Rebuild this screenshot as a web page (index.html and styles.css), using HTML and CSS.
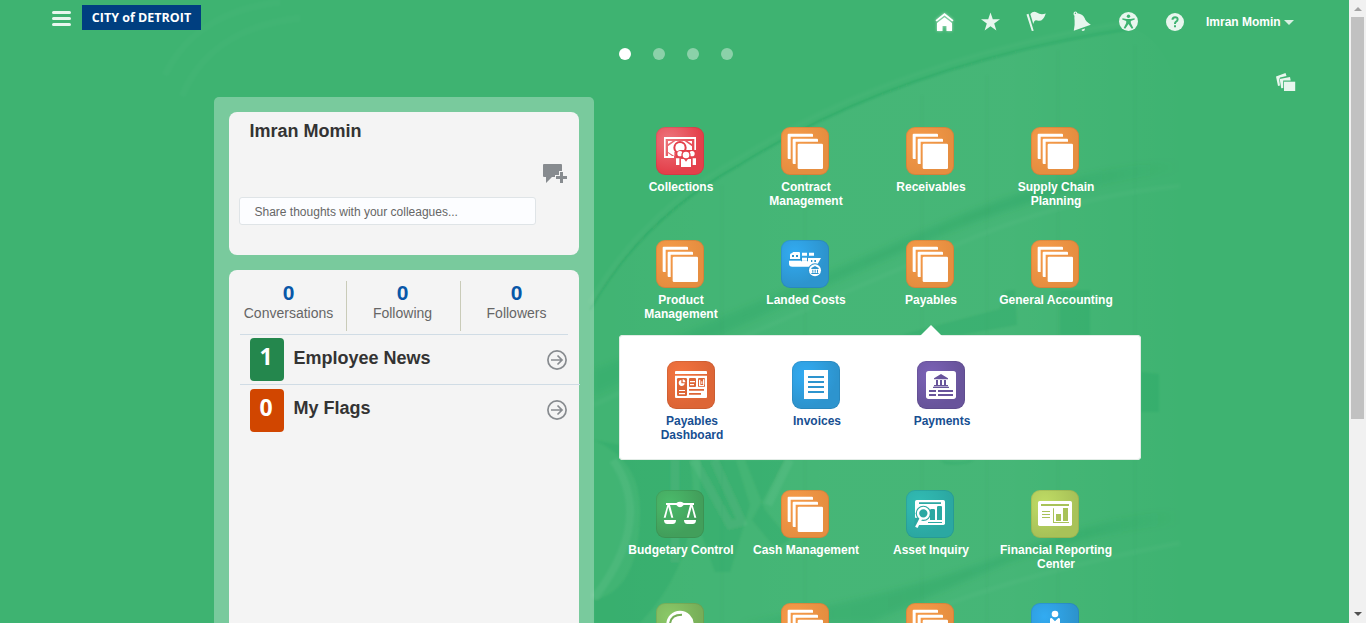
FILE: index.html
```
<!DOCTYPE html>
<html lang="en">
<head>
<meta charset="utf-8">
<title>City of Detroit</title>
<link rel="stylesheet" href="styles.css">
</head>
<body>
<svg class="defs" width="0" height="0" aria-hidden="true">
  <symbol id="stack" viewBox="0 0 144 144"><path fill="#fff" d="M23 20h70q3 0 3 3v6H29v67h-6q-3 0-3-3V23q0-3 3-3zM38 35h70q3 0 3 3v6H44v67h-6q-3 0-3-3V38q0-3 3-3z"/><rect x="50" y="50" width="76" height="76" rx="4" fill="#fff"/></symbol>
  <symbol id="collections" viewBox="0 0 144 144"><path fill="#fff" fill-rule="evenodd" d="M24 30h96v39h-5V36H29v51h25v6H24z"/><path fill="#fff" d="M36 51V42h14zM36 58l22-16h28l22 16v17H55v12l-19-12zM36 78l12 9H36zM94 42h14v9z"/><circle cx="72" cy="62" r="20" fill="currentColor"/><circle cx="72" cy="62" r="14" fill="#fff"/><path fill="currentColor" d="M59 92V82q4-13 16-13h45v23z"/><g fill="#fff"><circle cx="72" cy="80" r="8"/><circle cx="108" cy="80" r="8"/><circle cx="90" cy="84" r="14" fill="currentColor"/><circle cx="90" cy="84" r="10"/><path d="M60 94h10v20H60zM110 94h10v20h-10zM75 96h9l6 8 6-8h9v24H75z"/></g></symbol>
  <symbol id="ship" viewBox="0 0 144 144"><g fill="#fff"><path d="M27 57V45q0-5 5-5l5-4h17q3 0 3 4v17zM24 62h57v-8h39l-10 18q-20 0-24 8H34q-10 0-10-9z"/><path d="M63 38h15v9H63zM84 38h15v9H84zM63 53h15v9H63z"/><circle cx="102" cy="91" r="21" fill="currentColor"/><circle cx="102" cy="91" r="18"/></g><path fill="currentColor" d="M33 45h6v6h-6zM45 45h6v6h-6zM90 60h4v6h-4zM100 60h5v6h-5zM91 84l11-6 11 6v3H91zM94 89h3v9h-3zM101 89h3v9h-3zM108 89h3v9h-3zM91 99h22v3H91zM24 57h36v3H24zM60 50h3v14h-3zM78 50h3v14h-3z"/></symbol>
  <symbol id="dashboard" viewBox="0 0 144 144"><path fill="#fff" d="M24 33q0-3 3-3h90q3 0 3 3v6H24zM24 44h96v64q0 3-3 3H27q-3 0-3-3z"/><g fill="currentColor"><rect x="30" y="51" width="30" height="54" rx="4"/><rect x="66" y="51" width="21" height="27" rx="3"/><rect x="93" y="51" width="21" height="27" rx="3"/><path d="M66 84h45v5H66zM66 96h36v5H66z"/></g><path fill="#fff" d="M43 57v10h10a9 9 0 1 1-10-10zM47 55q8 1 8 9h-8zM36 87h18v3H36zM36 96h18v4H36zM69 60h15v4H69zM69 69h12v4H69zM96 56h4v16h11v4H96zM103 61h3v8h-3zM108 55h4v16h-4z"/></symbol>
  <symbol id="invoice" viewBox="0 0 144 144"><path fill="#fff" d="M36 27h72v87H36z"/><path stroke="currentColor" stroke-width="6" d="M48 48h48M48 63h48M48 78h48M48 93h48"/></symbol>
  <symbol id="payment" viewBox="0 0 144 144"><rect x="27" y="30" width="90" height="84" rx="8" fill="#fff"/><path fill="currentColor" d="M51 52l21-13 21 13v3H51zM57 57h6v15h-6zM69 57h6v15h-6zM81 57h6v15h-6zM51 72h42v4H51zM48 77h48v4H48zM36 87h21v6H36zM63 87h45v6H63zM36 99h21v6H36zM63 99h45v6H63z"/></symbol>
  <symbol id="scales" viewBox="0 0 144 144"><path fill="#fff" d="M30 45v-6h31q11-8 22 0h31v6h-4l11 38h-6l-8-32-9 32h-6l10-38H83q-11 14-22 0H42l10 38h-6l-9-32-8 32h-6l11-38zM24 90h36q0 12-10 12H34q-10 0-10-12zM84 90h36q0 12-10 12H94q-10 0-10-12z"/></symbol>
  <symbol id="inquiry" viewBox="0 0 144 144"><rect x="27" y="30" width="90" height="75" rx="5" fill="#fff"/><path fill="currentColor" d="M39 37h66v5H39zM93 52q0-4 4-4h8q3 0 3 4v38H93zM72 61q0-4 4-4h7q4 0 4 4v29H72zM66 96h42v3H66zM27 83h17L31 110h-8z"/><circle cx="52" cy="70" r="23" fill="currentColor"/><circle cx="52" cy="70" r="16" fill="none" stroke="#fff" stroke-width="7"/><circle cx="52" cy="70" r="9" fill="currentColor"/><path d="M45 85L31 112" stroke="#fff" stroke-width="8"/></symbol>
  <symbol id="report" viewBox="0 0 144 144"><rect x="21" y="33" width="102" height="75" rx="5" fill="#fff"/><path fill="currentColor" d="M30 42h84v6H30zM33 63h24v3H33zM33 72h24v3H33zM33 81h24v3H33zM66 55h3v41h45v3H66zM75 72h15v21H75zM96 54h15v39H96z"/></symbol>
  <symbol id="globe" viewBox="0 0 144 144"><circle cx="72" cy="64" r="41" fill="#fff"/><path d="M42 66q0-31 36-31" fill="none" stroke="currentColor" stroke-width="6"/></symbol>
  <symbol id="person" viewBox="0 0 144 144"><g fill="#fff"><circle cx="72" cy="33" r="10"/><path d="M57 48q0-3 5-3l10 10 10-10q5 0 5 3v60H57z"/></g></symbol>
</svg>

<svg class="backdrop" viewBox="0 0 1349 623" aria-hidden="true">
  <defs>
    <linearGradient id="fade"><stop offset="0" stop-color="#fff" stop-opacity=".015"/><stop offset=".4" stop-color="#fff" stop-opacity=".04"/><stop offset=".7" stop-color="#fff" stop-opacity=".04"/><stop offset="1" stop-color="#fff" stop-opacity="0"/></linearGradient>
    <linearGradient id="band"><stop offset="0" stop-color="#008a48" stop-opacity=".1"/><stop offset=".75" stop-color="#008a48" stop-opacity=".17"/><stop offset="1" stop-color="#008a48" stop-opacity="0"/></linearGradient>
    <linearGradient id="trail" gradientUnits="userSpaceOnUse" x1="590" y1="0" x2="1190" y2="0"><stop offset="0" stop-color="#fff"/><stop offset=".8" stop-color="#fff"/><stop offset="1" stop-color="#fff" stop-opacity="0"/></linearGradient>
    <filter id="soft"><feGaussianBlur stdDeviation="3"/></filter>
    <filter id="slight"><feGaussianBlur stdDeviation=".8"/></filter>
  </defs>
  <path fill="url(#fade)" d="M590 310Q640 220 740 165Q900 65 1130 28Q1180 40 1190 160V623H590z"/>
  <g filter="url(#slight)">
  <path class="bd-line" d="M590 310Q640 220 740 165Q900 65 1130 29"/>
  <path class="bd-faint" d="M590 303Q640 213 740 158Q900 58 1130 22"/>
  <path class="bd-ring" d="M165 75Q195 12 280 2M182 96Q210 28 300 18"/>
  </g>
  <g filter="url(#soft)"><path fill="url(#band)" d="M594 370Q800 285 930 228Q1060 170 1180 160V172Q1060 184 930 240Q800 296 594 395z"/>
  <path fill="url(#band)" d="M740 623Q900 595 1010 553Q1110 515 1180 510V524Q1080 532 990 570L870 623z"/></g>
  <g filter="url(#slight)">
  <path class="bd-faint" stroke="url(#trail)" d="M594 405Q800 310 940 252Q1060 197 1180 186M900 623Q1010 575 1180 543"/>
  <path class="bd-dark" d="M594 440Q640 460 640 510Q640 590 594 600V623H640Q705 555 690 460H736L750 505L730 572L715 572L700 530V460zM745 460L765 510L790 540L775 548L752 520L785 460zM900 335L1000 309L1005 291L1015 290L1017 325L960 335zM1060 290h30v45h-30zM1141 372l18 2v38h-18zM940 460q20 4 30 0h5q-10 6-30 4z"/>
  <path class="bd-light" d="M613 460Q655 520 594 598M694 460L730 525L742 522L714 460M768 505L790 460M675 460V562"/>
  <path class="bd-vert" d="M722 185V623M805 150V623M922 95V623M987 75V623M1058 50V623M1135 45V623"/>
  </g>
</svg>

<div class="page">
  <main class="content">
    <header class="topbar">
      <svg class="menu" width="19" height="15" viewBox="0 0 19 15"><path d="M1.5 1.5h16M1.5 7.5h16M1.5 13.5h16" stroke="#e8f6ee" stroke-width="3" stroke-linecap="round"/></svg>
      <div class="brand">CITY of DETROIT</div>
      <nav class="tools">
        <svg class="tool home" viewBox="0 0 24 24"><path fill="#fff" d="M12.500 3l9 7.200-1.200 1.400-7.800-6.100-7.800 6.100-1.200-1.400z"/><path fill="#fff" d="M12.500 7.200l7.500 5.800v8h-5.500v-5h-4v5H5v-8z"/></svg>
        <svg class="tool" viewBox="0 0 24 24"><path d="M12.500 2.500l2.300 6.800H22l-5.800 4.200 2.200 7-5.900-4.200-5.900 4.200 2.200-7L3 9.300h7.200z"/></svg>
        <svg class="tool" viewBox="0 0 24 24"><path d="M2.500 4.500l2-.8L9.700 20.700 7.800 21zM6.300 4q3-3.500 6.500-1.500 4 3 9 1-3 9-8.500 7-3-1.500-4 3.500z"/></svg>
        <svg class="tool" viewBox="0 0 24 24"><path fill-rule="evenodd" d="M3.500 3.500q0-2 2-2 1.500 0 1.900 1.700 6 1.300 7.200 4.800 1 3.500 6.200 6.700L3.800 20.700q1.200-6 .8-10-.4-3-.1-5-1-.2-1-2.200zm1.200-.2q.2.900 1.200.5.700-1-.3-1.300-.7 0-.9.800zM11.500 19.700l3.500-1.200q-.2 2.600-2 2.600-1.200 0-1.500-1.400z"/></svg>
        <svg class="tool" viewBox="0 0 24 24"><circle cx="12.500" cy="11.500" r="9.500"/><g class="cut"><circle cx="12.500" cy="6.300" r="1.700"/><path d="M6.500 8.300l4 .8h4l4-.8.300 1.300-4 1.400v2l2.500 5-1.500.8-3.300-4.800L9.200 18.800l-1.500-.8 2.500-5v-2l-4-1.400z"/></g></svg>
        <svg class="tool" viewBox="0 0 24 24"><circle cx="13" cy="12" r="9"/><path class="ask" d="M10.500 9.800q0-2.600 2.600-2.600t2.500 2.200q0 1.500-1.500 2.200-1.100.6-1.100 2v.4M13 15.200v2"/></svg>
      </nav>
      <div class="user">Imran Momin<span class="caret"></span></div>
    </header>
    <div class="pager"><i class="dot on"></i><i class="dot"></i><i class="dot"></i><i class="dot"></i></div>
    <div class="columns">
      <aside class="side">
        <section class="card profile">
          <h1 class="name">Imran Momin</h1>
          <div class="chatline"><svg width="24" height="20" viewBox="0 0 24 20"><path fill="#878b8f" d="M0 1q0-1 1-1h17q1 0 1 1v6h-3v4h-4v2H9L3 19v-6H1q-1 0-1-1zM17 8h3v4h4v3h-4v4h-3v-4h-4v-3h4z"/></svg></div>
          <div class="share">Share thoughts with your colleagues...</div>
        </section>
        <section class="card feed">
          <div class="stats">
            <div class="stat"><b>0</b><span>Conversations</span></div>
            <div class="stat"><b>0</b><span>Following</span></div>
            <div class="stat"><b>0</b><span>Followers</span></div>
          </div>
          <div class="row first"><span class="badge news">1</span><h2>Employee News</h2><svg class="go" viewBox="0 0 20 20"><circle cx="10" cy="10" r="9.100"/><path d="M4 10h11M10.500 5.500L15 10l-4.500 4.500"/></svg></div>
          <div class="row second"><span class="badge flags">0</span><h2>My Flags</h2><svg class="go" viewBox="0 0 20 20"><circle cx="10" cy="10" r="9.100"/><path d="M4 10h11M10.500 5.500L15 10l-4.500 4.500"/></svg></div>
        </section>
      </aside>
      <section class="apps">
        <div class="grid">
          <a class="app"><svg class="tile red"><use href="#collections"/></svg><span>Collections</span></a>
          <a class="app"><svg class="tile orange"><use href="#stack"/></svg><span>Contract<br>Management</span></a>
          <a class="app"><svg class="tile orange"><use href="#stack"/></svg><span>Receivables</span></a>
          <a class="app"><svg class="tile orange"><use href="#stack"/></svg><span>Supply Chain<br>Planning</span></a>
          <a class="app"><svg class="tile orange"><use href="#stack"/></svg><span>Product<br>Management</span></a>
          <a class="app"><svg class="tile blue"><use href="#ship"/></svg><span>Landed Costs</span></a>
          <a class="app"><svg class="tile orange"><use href="#stack"/></svg><span>Payables</span></a>
          <a class="app"><svg class="tile orange"><use href="#stack"/></svg><span>General Accounting</span></a>
        </div>
        <div class="popup">
          <a class="app"><svg class="tile rust"><use href="#dashboard"/></svg><span>Payables<br>Dashboard</span></a>
          <a class="app"><svg class="tile blue"><use href="#invoice"/></svg><span>Invoices</span></a>
          <a class="app"><svg class="tile purple"><use href="#payment"/></svg><span>Payments</span></a>
        </div>
        <div class="grid">
          <a class="app"><svg class="tile green"><use href="#scales"/></svg><span>Budgetary Control</span></a>
          <a class="app"><svg class="tile orange"><use href="#stack"/></svg><span>Cash Management</span></a>
          <a class="app"><svg class="tile teal"><use href="#inquiry"/></svg><span>Asset Inquiry</span></a>
          <a class="app"><svg class="tile lime"><use href="#report"/></svg><span>Financial Reporting<br>Center</span></a>
          <a class="app"><svg class="tile olive"><use href="#globe"/></svg></a>
          <a class="app"><svg class="tile orange"><use href="#stack"/></svg></a>
          <a class="app"><svg class="tile orange"><use href="#stack"/></svg></a>
          <a class="app"><svg class="tile blue"><use href="#person"/></svg></a>
        </div>
      </section>
      <svg class="cards" width="20" height="19" viewBox="0 0 20 19"><g fill="#e8f6ee"><path d="M0 3.500L9.500 0l1 3L4 4.500l-.8 2 .8 6-2 .5z"/><path d="M3.700 6L14 4l.7 3.500H7.200V15l-2 .3z"/><path d="M8 8.700h11.200V18H8z"/></g></svg>
    </div>
  </main>
  <div class="scrollbar"><i class="up"></i><i class="thumb"></i><i class="down"></i></div>
</div>
</body>
</html>
```
FILE: styles.css
```
* { box-sizing: border-box; }
html, body { height: 100%; overflow: hidden; }
body { margin: 0; background: #3eb371; font: 12px/14px "Liberation Sans", Arial, sans-serif; }
h1, h2 { margin: 0; font-weight: bold; color: #333; font-size: 18px; line-height: 20px; }
.defs { position: absolute; }
.backdrop { position: absolute; left: 0; top: 0; width: 1349px; height: 623px; }
.bd-line { fill: none; stroke: #169550; stroke-opacity: .25; stroke-width: 2; }
.bd-faint { fill: none; stroke: #fff; stroke-opacity: .025; stroke-width: 5; }
.bd-ring { fill: none; stroke: #fff; stroke-opacity: .015; stroke-width: 6; }
.bd-dark { fill: #168f50; fill-opacity: .14; }
.bd-light { fill: none; stroke: #fff; stroke-opacity: .05; stroke-width: 8; }
.bd-vert { fill: none; stroke: #0a8045; stroke-opacity: .07; }

.page { position: relative; display: flex; height: 623px; overflow: hidden; }
.content { width: 1349px; flex: none; }

.topbar { display: flex; height: 48px; padding: 5px 0 0 52px; align-items: flex-start; }
.menu { margin-top: 6px; }
.brand { margin-left: 11px; width: 119px; height: 25px; background: #003f80; color: #fff; font: bold 12.500px/25px "Open Sans", sans-serif; text-align: center; white-space: nowrap; }
.tools { display: flex; gap: 22px; margin: 5px 0 0 731px; }
.tool { width: 24px; height: 24px; fill: #e8f6ee; }
.home { filter: drop-shadow(0 0 1.500px rgba(255,255,255,.6)); }
.cut { fill: #3eb371; }
.ask { fill: none; stroke: #3eb371; stroke-width: 2; }
.user { display: flex; align-items: center; margin: 10px 0 0 20px; color: #fff; font-weight: bold; white-space: nowrap; }
.caret { margin-left: 3px; border: 5px solid transparent; border-top-color: #d8f0e2; border-bottom: 0; }

.pager { display: flex; gap: 22px; padding-left: 619px; height: 49px; }
.dot { width: 12px; height: 12px; border-radius: 50%; background: rgba(255,255,255,.4); }
.dot.on { background: #fff; }

.columns { display: flex; align-items: flex-start; padding-left: 214px; }
.side { width: 380px; height: 526px; flex: none; padding: 15px; border-radius: 5px 5px 0 0; background: rgba(255,255,255,.31); }
.card { background: #f4f4f4; border-radius: 8px; }
.profile { height: 143px; padding: 9px 12px 0 10px; }
.name { padding-left: 10.500px; }
.chatline { display: flex; justify-content: flex-end; padding-top: 23px; height: 56px; }
.share { width: 297px; height: 28px; border: 1px solid #dfe4e7; border-radius: 3px; background: #fcfdff; color: #666; padding-left: 14.500px; line-height: 28px; }
.feed { height: 360px; margin-top: 15px; border-radius: 8px 8px 0 0; padding-left: 11px; }
.stats { display: flex; width: 328px; height: 65px; padding-top: 11px; border-bottom: 1px solid #d0dce5; }
.stat { flex: none; width: 114px; height: 50px; display: flex; flex-direction: column; align-items: center; padding-right: 2px; border-right: 1px solid #c9cbb8; color: #666; font-size: 14px; }
.stat:first-child { margin-left: -7px; }
.stat:last-child { border: 0; padding-right: 3px; }
.stat b { color: #0857a8; font-size: 21px; line-height: 24px; height: 25px; }
.row { display: flex; align-items: flex-start; padding: 3px 0 0 10px; height: 50px; width: 340px; }
.first { border-bottom: 1px solid #d0dce5; }
.second { padding-top: 4px; }
.badge { width: 34px; height: 43px; border-radius: 4px; margin-right: 9.500px; padding-right: 2px; color: #fff; font: bold 23px/36px "Open Sans", sans-serif; text-align: center; }
.news { background: #24874d; }
.flags { background: #d14600; }
.row h2 { width: 253.500px; padding-top: 10px; }
.second h2 { padding-top: 9px; }
.go { width: 20px; height: 20px; margin-top: 12px; fill: none; stroke: #878b8f; stroke-width: 1.700; }
.second .go { margin-top: 11px; }

.apps { margin: 30px 0 0 25px; width: 522px; flex: none; }
.grid { display: grid; grid-template-columns: repeat(4, 125px); grid-auto-rows: 113px; }
.app { display: block; width: 125px; color: #fff; font-weight: bold; text-align: center; }
.app span { display: block; margin: 5px 1px 0 0; white-space: nowrap; }
.tile { display: block; width: 48px; height: 48px; margin-left: 37px; border-radius: 9px; background: radial-gradient(circle at 28% 28%, var(--glow), var(--base) 65%); color: var(--base); box-shadow: inset 0 0 0 1px rgba(0,0,0,.08); }
.red { --base: #e4404b; --glow: #ed747c; }
.orange { --base: #e68e40; --glow: #f69b49; }
.blue { --base: #2d94ce; --glow: #32abf2; }
.rust { --base: #dd6536; --glow: #f3743f; }
.purple { --base: #68549b; --glow: #7b62b6; }
.green { --base: #429f5b; --glow: #4bbb6b; }
.teal { --base: #2ba8a2; --glow: #32bcb4; }
.lime { --base: #a8c258; --glow: #c0dc65; }
.olive { --base: #77ae58; --glow: #8bc968; }
.popup { position: relative; display: flex; width: 522px; height: 125px; margin: -18px 0 30px; padding: 26px 0 0 11px; background: #fff; border-radius: 4px; box-shadow: inset 0 0 0 1px #e2ece6; }
.popup::before { content: ""; position: absolute; left: 299px; top: -10px; border: 13px solid transparent; border-top: 0; border-bottom-color: #fff; }
.popup .app { color: #174f92; }
.cards { margin: -24px 0 0 135px; }

.scrollbar { width: 17px; flex: none; background: #f1f1f1; padding-left: 2px; display: flex; flex-direction: column; }
.thumb { width: 13px; height: 402px; background: #c1c1c1; margin-top: 6px; }
.up, .down { width: 0; border: 4px solid transparent; margin-left: 2.500px; }
.up { border-top: 0; border-bottom-color: #a3a3a3; margin-top: 7px; }
.down { border-bottom: 0; border-top-color: #505050; margin: auto 0 7px 2.500px; }
```
